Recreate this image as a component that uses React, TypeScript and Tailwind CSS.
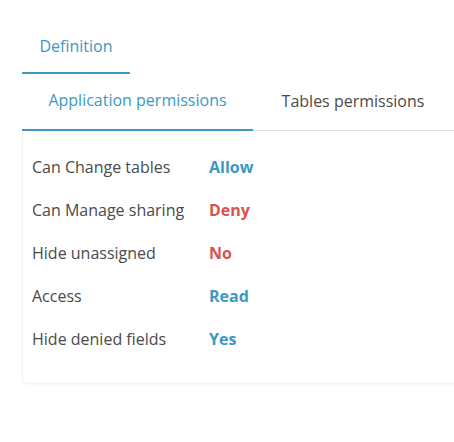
import React from "react";

const rows: { label: string; value: string; color: string }[] = [
  { label: "Can Change tables", value: "Allow", color: "text-[#3d98c3]" },
  { label: "Can Manage sharing", value: "Deny", color: "text-[#d9534f]" },
  { label: "Hide unassigned", value: "No", color: "text-[#d9534f]" },
  { label: "Access", value: "Read", color: "text-[#3d98c3]" },
  { label: "Hide denied fields", value: "Yes", color: "text-[#3d98c3]" },
];

export default function App() {
  return (
    <div className="w-[454px] h-[442px] bg-white font-['Open_Sans',sans-serif] text-[16px] text-[#4a4a4a]">
      <div className="pl-[22px] pt-[26px]">
        <div className="flex">
          <div className="w-[108px] h-[48px] flex items-start justify-center pt-[8px] border-b-2 border-[#3d98c3] text-[#3d98c3]">
            Definition
          </div>
        </div>
        <div className="flex border-b border-[#dde3e3] h-[57px]">
          <div className="w-[231px] flex items-center justify-center pb-[3px] border-b-2 border-[#3d98c3] -mb-px text-[#3d98c3]">
            Application permissions
          </div>
          <div className="w-[200px] flex items-center justify-center pb-[3px]">
            Tables permissions
          </div>
        </div>
        <div className="h-[253px] rounded-bl-[6px] border-l border-b border-[#f2f2f2] shadow-[0_1px_2px_rgba(0,0,0,0.03)] pt-[14px] pl-[9px]">
          {rows.map((r) => (
            <div key={r.label} className="flex items-center h-[43px]">
              <span className="w-[177px]">{r.label}</span>
              <span className={`font-bold ${r.color}`}>{r.value}</span>
            </div>
          ))}
        </div>
      </div>
    </div>
  );
}
